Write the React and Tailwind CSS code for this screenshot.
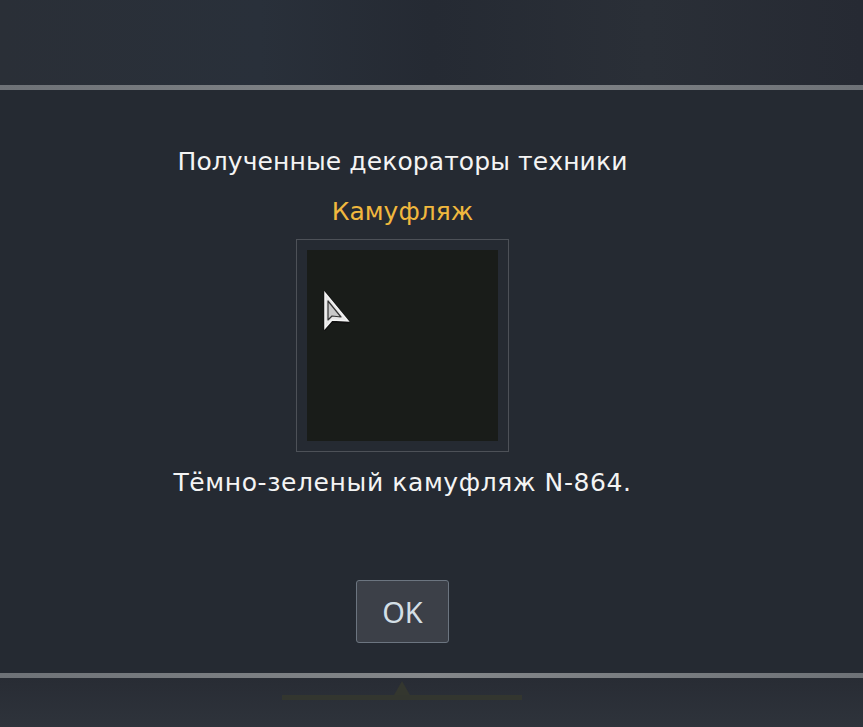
export default function App() {
  const font = { fontFamily: '"DejaVu Sans", "Noto Sans", sans-serif' };
  return (
    <div className="w-[863px] h-[727px] overflow-hidden bg-[#252a32] flex flex-col" style={font}>
      <div className="h-[85px] bg-[linear-gradient(90deg,#2a2f37_0%,#29303a_30%,#252a33_50%,#2a2f37_75%,#262a33_100%)]" />
      <div className="h-[5px] bg-[linear-gradient(90deg,#6e7277,#84878a_50%,#6e7277)]" />
      <div className="flex-1 flex flex-col items-center pr-[58px]">
        <div className="mt-[54px] h-[36px] flex items-center text-[25px] text-[#f4f4f4] whitespace-nowrap tracking-[0.1px]">Полученные декораторы техники</div>
        <div className="mt-[18px] h-[28px] flex items-center text-[25px] text-[#f1b83e]">Камуфляж</div>
        <div className="mt-[13px] w-[213px] h-[213px] border border-[#4d5158] p-[10px]">
          <div className="relative w-full h-full bg-[#191c19]">
            <svg className="absolute left-[16px] top-[41px]" width="30" height="42" viewBox="0 0 30 42">
              <path d="M2 2 L2 38 L9 30 L25 31 Z" fill="#1a1a1a" stroke="#111" strokeWidth="3" strokeLinejoin="round" />
              <path d="M2 2 L2 37 L9 29 L25 30 Z" fill="#e6e6e6" stroke="#f5f5f5" strokeWidth="1.5" />
              <path d="M5 10 L5 29 L9 25 L18 26 Z" fill="#c9c9c9" stroke="#333" strokeWidth="1.2" strokeLinejoin="round" />
            </svg>
          </div>
        </div>
        <div className="mt-[16px] h-[30px] flex items-center text-[25px] text-[#f4f4f4] whitespace-nowrap tracking-[0.6px]">Тёмно-зеленый камуфляж N-864.</div>
        <button className="mt-[82px] w-[93px] h-[63px] rounded-[3px] border border-[#6c7580] bg-[#3c4048] text-[29px] text-[#d3dfe6] flex items-center justify-center" style={{ fontFamily: '"Noto Sans", sans-serif' }}>OK</button>
      </div>
      <div className="h-[5px] bg-[linear-gradient(90deg,#6e7277,#84878a_50%,#6e7277)]" />
      <div className="h-[49px] bg-[linear-gradient(180deg,#282c34,#2e333b)] flex justify-center">
        <div className="ml-[-60px] flex flex-col items-center">
          <div className="w-0 h-0 border-l-[8px] border-r-[8px] border-b-[14px] border-l-transparent border-r-transparent border-b-[#34372f] mt-[3px]" />
          <div className="w-[240px] h-[5px] bg-[#33362f]" />
        </div>
      </div>
    </div>
  );
}
